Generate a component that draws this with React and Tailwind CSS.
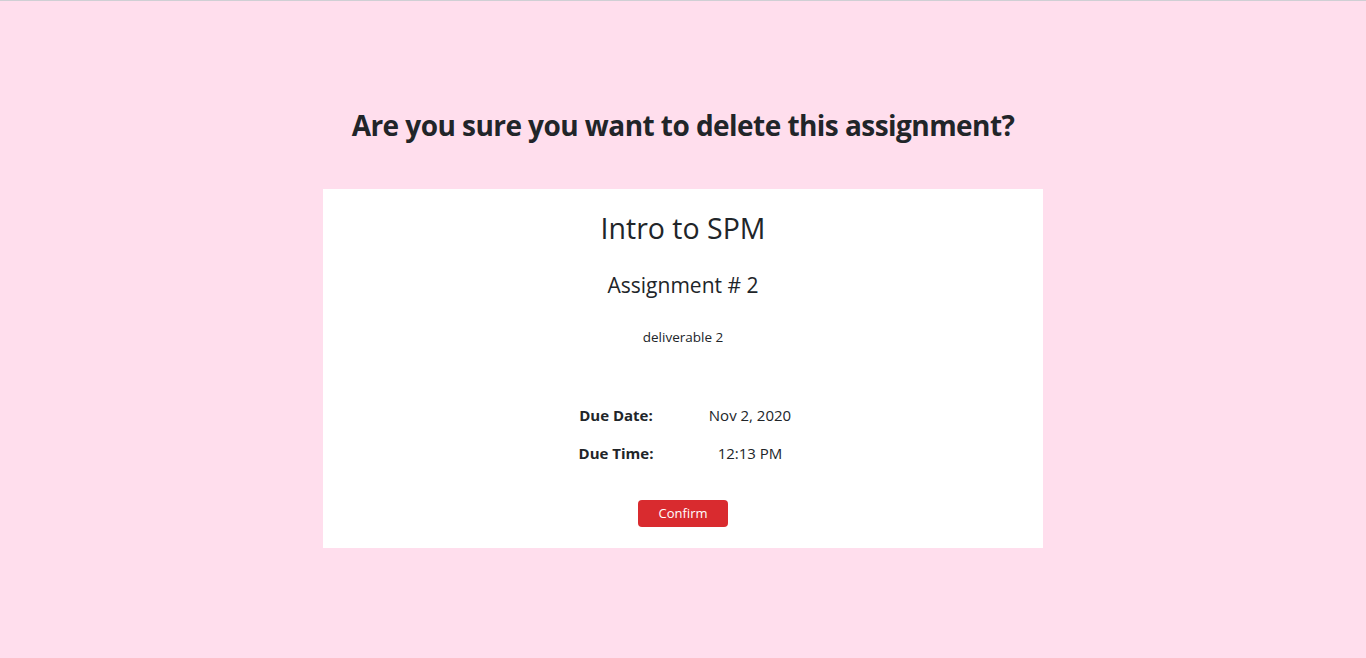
export default function App() {
  const rows = [
    { label: 'Due Date:', value: 'Nov 2, 2020' },
    { label: 'Due Time:', value: '12:13 PM' },
  ]

  return (
    <div className="min-h-[658px] bg-[#ffdeed] border-t border-[#cfcfd4] text-[#212529] font-['Open_Sans','Noto_Sans',sans-serif]">
      <div className="flex flex-col items-center pt-[103px]">
        <h2 className="text-[28px] leading-[42px] font-bold tracking-[-0.55px]">
          Are you sure you want to delete this assignment?
        </h2>

        {/* Assignment card */}
        <div className="mt-[43px] w-[720px] h-[359px] bg-white flex flex-col items-center pt-[19px]">
          <h3 className="text-[28.5px] leading-[40px]">Intro to SPM</h3>
          <h4 className="mt-[20px] text-[21px] leading-[34px]">Assignment # 2</h4>
          <p className="mt-[25px] text-[13.5px] leading-[20px]">deliverable 2</p>

          <div className="mt-[56px] grid grid-cols-[134px_134px] gap-y-[14px] text-[15px] leading-[24px]">
            {rows.map((row) => (
              <div key={row.label} className="contents">
                <span className="text-center font-bold">{row.label}</span>
                <span className="text-center">{row.value}</span>
              </div>
            ))}
          </div>

          <button className="mt-[35px] w-[90px] h-[27px] rounded-[4px] bg-[#d92b2f] text-white text-[13px]">
            Confirm
          </button>
        </div>
      </div>
    </div>
  )
}
